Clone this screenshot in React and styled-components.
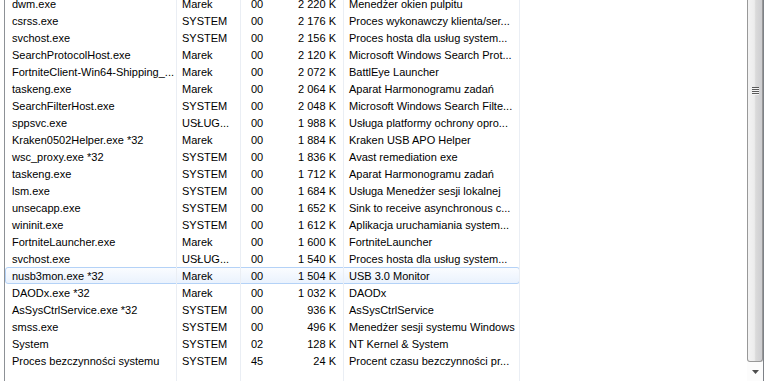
import React from 'react'
import styled, { createGlobalStyle } from 'styled-components'

const GlobalStyle = createGlobalStyle`
  html, body {
    margin: 0;
    padding: 0;
    background: #fff;
    overflow: hidden;
  }
  body {
    font-family: "Liberation Sans", Arial, sans-serif;
    font-size: 11px;
    color: #000;
  }
`

const processes = [
  ['dwm.exe', 'Marek', '00', '2 220 K', 'Menedżer okien pulpitu'],
  ['csrss.exe', 'SYSTEM', '00', '2 176 K', 'Proces wykonawczy klienta/ser...'],
  ['svchost.exe', 'SYSTEM', '00', '2 156 K', 'Proces hosta dla usług system...'],
  ['SearchProtocolHost.exe', 'Marek', '00', '2 120 K', 'Microsoft Windows Search Prot...'],
  ['FortniteClient-Win64-Shipping_...', 'Marek', '00', '2 072 K', 'BattlEye Launcher'],
  ['taskeng.exe', 'Marek', '00', '2 064 K', 'Aparat Harmonogramu zadań'],
  ['SearchFilterHost.exe', 'SYSTEM', '00', '2 048 K', 'Microsoft Windows Search Filte...'],
  ['sppsvc.exe', 'USŁUG...', '00', '1 988 K', 'Usługa platformy ochrony opro...'],
  ['Kraken0502Helper.exe *32', 'Marek', '00', '1 884 K', 'Kraken USB APO Helper'],
  ['wsc_proxy.exe *32', 'SYSTEM', '00', '1 836 K', 'Avast remediation exe'],
  ['taskeng.exe', 'SYSTEM', '00', '1 712 K', 'Aparat Harmonogramu zadań'],
  ['lsm.exe', 'SYSTEM', '00', '1 684 K', 'Usługa Menedżer sesji lokalnej'],
  ['unsecapp.exe', 'SYSTEM', '00', '1 652 K', 'Sink to receive asynchronous c...'],
  ['wininit.exe', 'SYSTEM', '00', '1 612 K', 'Aplikacja uruchamiania system...'],
  ['FortniteLauncher.exe', 'Marek', '00', '1 600 K', 'FortniteLauncher'],
  ['svchost.exe', 'USŁUG...', '00', '1 540 K', 'Proces hosta dla usług system...'],
  ['nusb3mon.exe *32', 'Marek', '00', '1 504 K', 'USB 3.0 Monitor'],
  ['DAODx.exe *32', 'Marek', '00', '1 032 K', 'DAODx'],
  ['AsSysCtrlService.exe *32', 'SYSTEM', '00', '936 K', 'AsSysCtrlService'],
  ['smss.exe', 'SYSTEM', '00', '496 K', 'Menedżer sesji systemu Windows'],
  ['System', 'SYSTEM', '02', '128 K', 'NT Kernel & System'],
  ['Proces bezczynności systemu', 'SYSTEM', '45', '24 K', 'Procent czasu bezczynności pr...'],
]

const SELECTED = 16

const Screen = styled.div`
  display: flex;
  height: 381px;
  width: 770px;
  padding-left: 4px;
  box-sizing: border-box;
`

const Panel = styled.div`
  display: flex;
  width: 760px;
  height: 100%;
  border-left: 1px solid #8d9196;
  border-right: 1px solid #7d8187;
  box-sizing: border-box;
  overflow: hidden;
`

const List = styled.div`
  flex: 1;
  display: flex;
  flex-direction: column;
  margin-top: -5px;
  min-width: 0;
`

const Row = styled.div`
  position: relative;
  display: grid;
  grid-template-columns: 172px 64px 40px 63px 176px 1fr;
  height: 17px;
  flex: ${p => (p.$filler ? 1 : 'none')};

  &::before {
    content: '';
    display: ${p => (p.$selected ? 'block' : 'none')};
    position: absolute;
    left: 0;
    top: 0;
    width: 515px;
    height: 17px;
    box-sizing: border-box;
    border: 1px solid #b4d2f7;
    border-radius: 3px;
    background: linear-gradient(#fafcff, #eaf2fd);
  }
`

const Cell = styled.div`
  position: relative;
  white-space: nowrap;
  overflow: hidden;
  box-sizing: border-box;
  padding-top: 1px;
  line-height: 16px;
  padding-left: ${p => p.$pl || 0}px;
  padding-right: ${p => p.$pr || 0}px;
  text-align: ${p => (p.$right ? 'right' : 'left')};
  border-right: ${p => (p.$line ? '1px solid #eaeef4' : 'none')};
`

const Scrollbar = styled.div`
  width: 16px;
  display: flex;
  flex-direction: column;
  flex: none;
`

const Thumb = styled.div`
  height: 362px;
  box-sizing: border-box;
  border: 1px solid #989898;
  border-top: none;
  border-radius: 0 0 3px 3px;
  background: linear-gradient(to right, #f3f3f3 0%, #ececec 45%, #dadada 55%, #cdcdd0 100%);
  display: flex;
  justify-content: center;
  padding-top: 87px;
`

const Gripper = styled.div`
  width: 7px;
  height: 8px;
  background: repeating-linear-gradient(#5a5a5a 0 1px, #f4f4f4 1px 2px);
`

const ArrowButton = styled.div`
  flex: 1;
  display: flex;
  align-items: center;
  justify-content: center;
  background: #fcfcfc;
`

const Row5 = ({ cells, selected, filler }) => (
  <Row $selected={selected} $filler={filler}>
    <Cell $pl={7} $line>{cells[0]}</Cell>
    <Cell $pl={5} $line>{cells[1]}</Cell>
    <Cell $pl={10}>{cells[2]}</Cell>
    <Cell $pr={7} $right $line>{cells[3]}</Cell>
    <Cell $pl={5} $line>{cells[4]}</Cell>
    <Cell />
  </Row>
)

const App = () => (
  <>
    <GlobalStyle />
    <Screen>
      <Panel>
        <List>
          {processes.map((p, i) => (
            <Row5 key={i} cells={p.map(v => v.replace(/ (?=\d{3} K)/, '\u00a0'))} selected={i === SELECTED} />
          ))}
          <Row5 cells={['', '', '', '', '']} filler />
        </List>
        <Scrollbar>
          <Thumb>
            <Gripper />
          </Thumb>
          <ArrowButton>
            <svg width="7" height="4" viewBox="0 0 7 4">
              <path d="M0 0h7L3.5 4z" fill="#4d4d4d" />
            </svg>
          </ArrowButton>
        </Scrollbar>
      </Panel>
    </Screen>
  </>
)

export default App
